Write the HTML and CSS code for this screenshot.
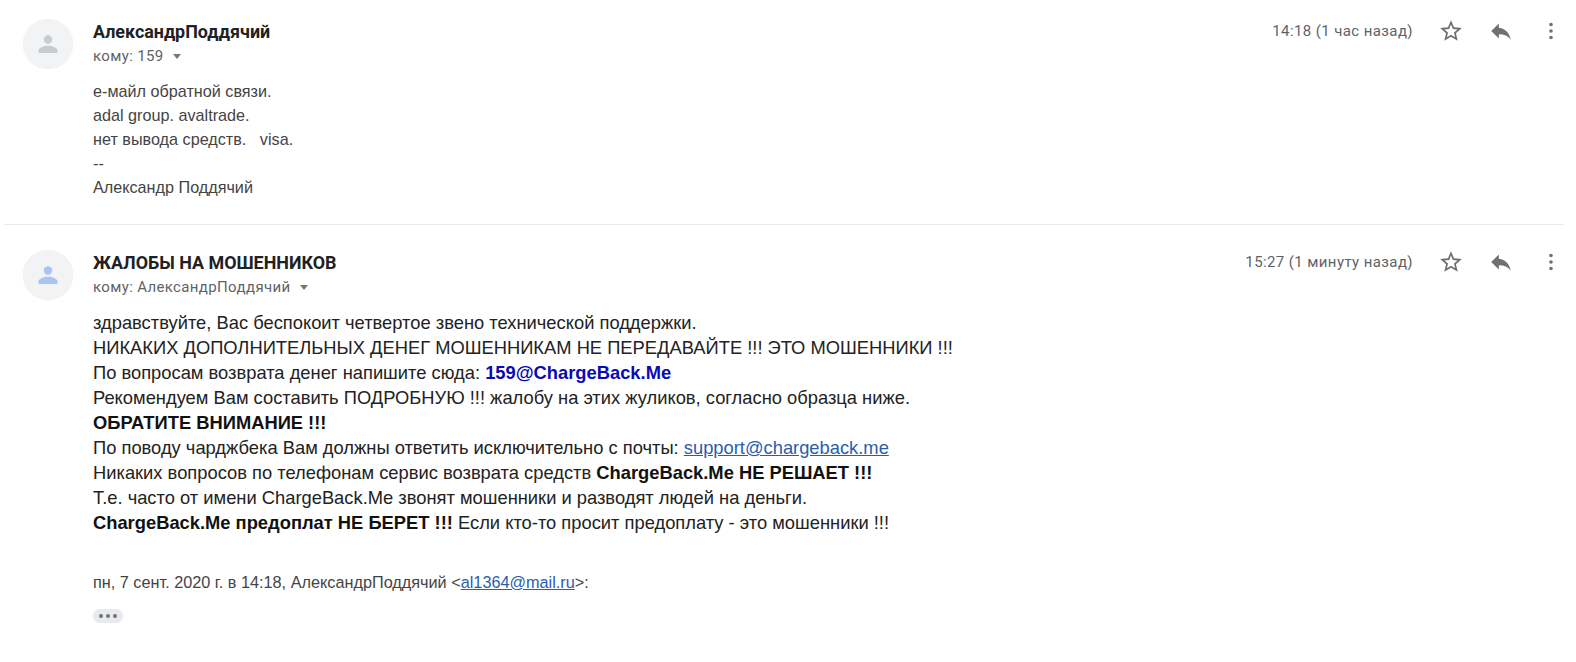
FILE: index.html
```html
<!DOCTYPE html>
<html lang="ru">
<head>
<meta charset="utf-8">
<title>Mail</title>
<link rel="stylesheet" href="styles.css">
</head>
<body>
<div class="thread">
  <section class="msg first">
    <div class="avatar grey">
      <svg viewBox="0 0 24 24" width="24" height="24"><circle cx="12" cy="7.5" r="4.2"/><path d="M2.5 21v-2.5c0-3 6-4.7 9.5-4.7s9.5 1.7 9.5 4.7V21z"/></svg>
    </div>
    <div class="main">
      <div class="head">
        <div class="who">
          <div class="name">АлександрПоддячий</div>
          <div class="to">кому: 159 <span class="caret"></span></div>
        </div>
        <div class="tools">
          <span class="time">14:18 (1 час назад)</span>
          <svg class="star" viewBox="0 0 24 24" width="26" height="26"><path d="M22 9.24l-7.19-.62L12 2 9.19 8.63 2 9.24l5.46 4.73L5.82 21 12 17.27 18.18 21l-1.63-7.03L22 9.24zM12 15.4l-3.76 2.27 1-4.28-3.32-2.88 4.38-.38L12 6.1l1.71 4.04 4.38.38-3.32 2.88 1 4.28L12 15.4z"/></svg>
          <svg class="reply" viewBox="0 0 24 24" width="26" height="26"><path d="M10 9V5l-7 7 7 7v-4.1c5 0 8.5 1.6 11 5.1-1-5-4-10-11-11z"/></svg>
          <svg class="more" viewBox="0 0 24 24" width="24" height="24"><circle cx="12" cy="5.5" r="1.8"/><circle cx="12" cy="12" r="1.8"/><circle cx="12" cy="18.5" r="1.8"/></svg>
        </div>
      </div>
      <div class="body small">
        <div>е-майл обратной связи.</div>
        <div>adal group. avaltrade.</div>
        <div>нет вывода средств. &nbsp; visa.</div>
        <div>--</div>
        <div>Александр Поддячий</div>
      </div>
    </div>
  </section>
  <section class="msg second">
    <div class="avatar blue">
      <svg viewBox="0 0 24 24" width="24" height="24"><circle cx="12" cy="7.5" r="4.2"/><path d="M2.5 21v-2.5c0-3 6-4.7 9.5-4.7s9.5 1.7 9.5 4.7V21z"/></svg>
    </div>
    <div class="main">
      <div class="head">
        <div class="who">
          <div class="name">ЖАЛОБЫ НА МОШЕННИКОВ</div>
          <div class="to">кому: АлександрПоддячий <span class="caret"></span></div>
        </div>
        <div class="tools">
          <span class="time">15:27 (1 минуту назад)</span>
          <svg class="star" viewBox="0 0 24 24" width="26" height="26"><path d="M22 9.24l-7.19-.62L12 2 9.19 8.63 2 9.24l5.46 4.73L5.82 21 12 17.27 18.18 21l-1.63-7.03L22 9.24zM12 15.4l-3.76 2.27 1-4.28-3.32-2.88 4.38-.38L12 6.1l1.71 4.04 4.38.38-3.32 2.88 1 4.28L12 15.4z"/></svg>
          <svg class="reply" viewBox="0 0 24 24" width="26" height="26"><path d="M10 9V5l-7 7 7 7v-4.1c5 0 8.5 1.6 11 5.1-1-5-4-10-11-11z"/></svg>
          <svg class="more" viewBox="0 0 24 24" width="24" height="24"><circle cx="12" cy="5.5" r="1.8"/><circle cx="12" cy="12" r="1.8"/><circle cx="12" cy="18.5" r="1.8"/></svg>
        </div>
      </div>
      <div class="body large">
        <div>здравствуйте, Вас беспокоит четвертое звено технической поддержки.</div>
        <div>НИКАКИХ ДОПОЛНИТЕЛЬНЫХ ДЕНЕГ МОШЕННИКАМ НЕ ПЕРЕДАВАЙТЕ !!! ЭТО МОШЕННИКИ !!!</div>
        <div>По вопросам возврата денег напишите сюда: <b class="navy">159@ChargeBack.Me</b></div>
        <div>Рекомендуем Вам составить ПОДРОБНУЮ !!! жалобу на этих жуликов, согласно образца ниже.</div>
        <div><b>ОБРАТИТЕ ВНИМАНИЕ !!!</b></div>
        <div>По поводу чарджбека Вам должны ответить исключительно с почты: <a href="#">support@chargeback.me</a></div>
        <div>Никаких вопросов по телефонам сервис возврата средств <b>ChargeBack.Me НЕ РЕШАЕТ !!!</b></div>
        <div>Т.е. часто от имени ChargeBack.Me звонят мошенники и разводят людей на деньги.</div>
        <div><b>ChargeBack.Me предоплат НЕ БЕРЕТ !!!</b> Если кто-то просит предоплату - это мошенники !!!</div>
      </div>
      <div class="quote">пн, 7 сент. 2020 г. в 14:18, АлександрПоддячий &lt;<a href="#">al1364@mail.ru</a>&gt;:</div>
      <div class="dots"><i></i><i></i><i></i></div>
    </div>
  </section>
</div>
</body>
</html>
```
FILE: styles.css
```css
html, body { margin: 0; padding: 0; background: #fff; }
body { font-family: "Liberation Sans", Arial, sans-serif; color: #222; height: 662px; overflow: hidden; }
.thread { padding: 0 12px 0 4px; }
.msg { display: flex; padding: 0 0 0 19px; }
.first { height: 225px; padding-top: 19px; box-sizing: border-box; border-bottom: 1px solid #e9e9e9; }
.second { padding-top: 25px; }
.avatar { width: 50px; height: 50px; border-radius: 50%; background: #f1f3f4; flex: none; display: flex; align-items: center; justify-content: center; margin-right: 20px; box-shadow: 0 0 1px rgba(0,0,0,.08); }
.avatar.grey svg { fill: #c9cbcd; }
.avatar.blue svg { fill: #a8c4f2; }
.main { flex: 1; min-width: 0; }
.head { display: flex; justify-content: space-between; align-items: flex-start; }
.name { font: 700 17.9px/20px Roboto, "Liberation Sans", sans-serif; color: #202124; margin-top: 3px; }
.to { font: 400 15px/20px Roboto, "Liberation Sans", sans-serif; color: #5f6368; letter-spacing: .35px; margin-top: 4px; }
.caret { display: inline-block; width: 0; height: 0; border: 4.5px solid transparent; border-top: 5px solid #777; border-bottom: 0; margin-left: 5px; vertical-align: 2px; }
.tools { display: flex; align-items: center; margin: -1px 1px 0 0; }
.time { font: 400 15px/20px Roboto, "Liberation Sans", sans-serif; color: #5f6368; letter-spacing: .4px; margin-right: 25px; }
.tools svg { fill: #707070; flex: none; }
.reply { margin-left: 24px; }
.more { margin-left: 25px; }
.body { color: #333; }
.small { font-size: 16.2px; line-height: 24.1px; margin-top: 13px; }
.small div { color: #444; }
.large { font-size: 18.34px; line-height: 25px; margin-top: 13px; color: #222; }
.large b { color: #111; }
.navy, .large b.navy { color: #0a0ab5; }
a { color: #2a5db0; }
.quote { font-size: 16.26px; line-height: 20px; color: #444; margin-top: 37px; }
.dots { display: inline-flex; gap: 3px; align-items: center; justify-content: center; width: 30px; height: 14px; border-radius: 7px; background: #e8eaed; margin-top: 17px; }
.dots i { width: 4px; height: 4px; border-radius: 50%; background: #70757a; }
```
